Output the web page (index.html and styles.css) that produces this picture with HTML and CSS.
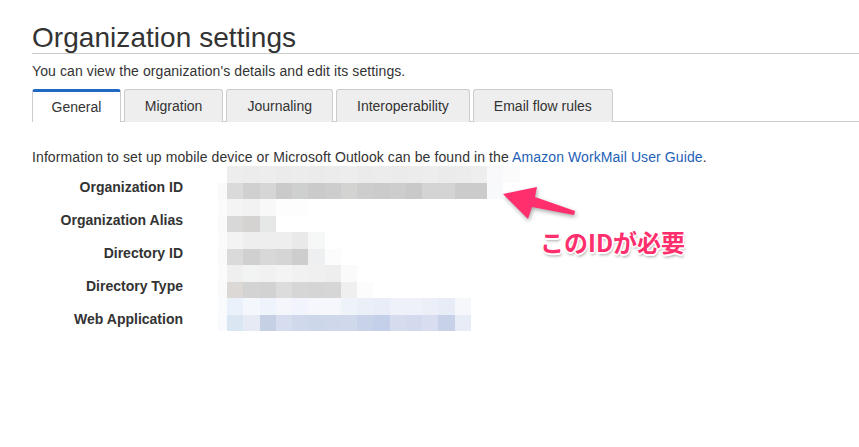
FILE: index.html
```html
<!DOCTYPE html>
<html lang="en">
<head>
<meta charset="utf-8">
<title>Organization settings</title>
<link rel="stylesheet" href="styles.css">
</head>
<body>
<main class="page">
  <h1 class="title">Organization settings</h1>
  <p class="subtitle">You can view the organization's details and edit its settings.</p>
  <nav class="tabs">
    <span class="tab active">General</span>
    <span class="tab">Migration</span>
    <span class="tab">Journaling</span>
    <span class="tab">Interoperability</span>
    <span class="tab">Email flow rules</span>
  </nav>
  <p class="info">Information to set up mobile device or Microsoft Outlook can be found in the <a class="link" href="#">Amazon WorkMail User Guide</a>.</p>
  <div class="fields">
    <div class="label">Organization ID</div><div class="mosaic" data-key="org"></div>
    <div class="label">Organization Alias</div><div class="mosaic" data-key="alias"></div>
    <div class="label">Directory ID</div><div class="mosaic" data-key="dir"></div>
    <div class="label">Directory Type</div><div class="mosaic" data-key="type"></div>
    <div class="label">Web Application</div><div class="mosaic" data-key="web"></div>
  </div>
  <svg class="arrow" width="90" height="45" viewBox="0 0 90 45" aria-hidden="true">
    <polygon points="3,10 37,3 35,13 75,27 74,31 32,23 28,35" fill="#ff2e6c"/>
  </svg>
  <div class="note">このIDが必要</div>
</main>
<script src="script.js"></script>
</body>
</html>
```
FILE: styles.css
```css
html, body {
  margin: 0;
  padding: 0;
  background: #ffffff;
}
body {
  font-family: "Liberation Sans", Arial, Helvetica, sans-serif;
  color: #333333;
  font-size: 14px;
  letter-spacing: 0.1px;
}
.page {
  position: relative;
  padding-left: 32px;
  height: 447px;
  box-sizing: border-box;
  overflow: hidden;
}
.title {
  margin: 23px 0 0 0;
  font-size: 28px;
  font-weight: normal;
  line-height: 30px;
  letter-spacing: 0.05px;
  color: #333333;
  border-bottom: 1px solid #cccccc;
}
.subtitle {
  margin: 8px 0 0 0;
  line-height: 18px;
  font-size: 14px;
  color: #333333;
}
.tabs {
  display: flex;
  gap: 3px;
  margin-top: 9px;
  border-bottom: 1px solid #cccccc;
  height: 32px;
}
.tab {
  box-sizing: border-box;
  height: 33px;
  padding: 0 20px 1px 20px;
  border: 1px solid #cccccc;
  border-bottom: none;
  border-radius: 3px 3px 0 0;
  background: #eeeeee;
  color: #333333;
  display: flex;
  align-items: center;
  justify-content: center;
  line-height: 18px;
  letter-spacing: 0;
}
.tab.active {
  background: #ffffff;
  border-top: 3px solid #1f68c4;
  padding: 0 18.5px 1px 18.5px;
}
.info {
  margin: 26px 0 0 0;
  line-height: 18px;
  color: #333333;
}
.link {
  color: #1f5fb8;
  text-decoration: none;
}
.fields {
  display: grid;
  grid-template-columns: 151px 1fr;
  column-gap: 35px;
  grid-auto-rows: 33px;
}
.label {
  text-align: right;
  font-weight: bold;
  line-height: 18px;
  padding-top: 12px;
  letter-spacing: 0;
  color: #333333;
}
.mosaic {
  display: flex;
  flex-direction: column;
}
.stripe {
  display: flex;
  height: 16.5px;
}
.cell {
  width: 16.25px;
  flex: none;
}
.cell.edge {
  width: 9px;
}
.arrow {
  position: absolute;
  left: 500px;
  top: 184px;
  overflow: visible;
  filter: drop-shadow(1px 2px 2px rgba(0, 0, 0, 0.35));
}
.note {
  position: absolute;
  left: 540px;
  top: 229px;
  font-family: "Noto Sans CJK JP", "Noto Sans", sans-serif;
  font-weight: bold;
  font-size: 24px;
  line-height: 26px;
  color: #ff2e6c;
  letter-spacing: 0;
  text-shadow:
    1.5px 0 0 #ffffff, -1.5px 0 0 #ffffff, 0 1.5px 0 #ffffff, 0 -1.5px 0 #ffffff,
    1px 1px 0 #ffffff, -1px -1px 0 #ffffff, 1px -1px 0 #ffffff, -1px 1px 0 #ffffff,
    1px 3px 3px rgba(0, 0, 0, 0.35);
}
```
FILE: script.js
```js
(function () {
  var W = "#ffffff";
  var data = {
    org: [
      ["#ffffff", "#ededed", "#ececec", "#ededed", "#ebebeb", "#ececec", "#ebebeb", "#ececec", "#ededed", "#ebebeb", "#ececec", "#ebebeb", "#ececec", "#ededed", "#ebebeb", "#ececec", "#eeeeee", "#f9f9fb", "#fbfbfc"],
      ["#fafafa", "#dadada", "#d0d0d0", "#d6d6d6", "#cacaca", "#cdd0cf", "#cacaca", "#cdcdcd", "#d3d3d1", "#cdcdcd", "#cbcbcb", "#cdcdcd", "#c9c9c9", "#d4d4d4", "#d4d4d4", "#cbcbcb", "#cbcbcb", "#f8f9fb"]
    ],
    alias: [
      ["#fbfbfb", "#f4f4f4", "#f2f2f2", "#f8f8f8", "#fdfdfd", "#fdfdfd"],
      ["#fafafa", "#d8d8d8", "#d4d3d2", "#e6e8e8"]
    ],
    dir: [
      ["#fbfbfb", "#f3f3f3", "#eeeeee", "#eeeeee", "#eeeeee", "#e9e9e9", "#f6f7f7"],
      ["#fafafa", "#dadada", "#d0d0d0", "#d8d8d8", "#d5d5d5", "#cdcdcd", "#eeeff0", "#fcfcfc"]
    ],
    type: [
      ["#fbfbfb", "#efefef", "#f2f3f3", "#f1f1f1", "#f4f4f4", "#f1f1f1", "#f0f0f0", "#eeeeee", "#fafafa"],
      ["#fafafa", "#dbd8d6", "#d3d3d3", "#d2d2d2", "#dcdcdc", "#d6d6d6", "#d5d5d5", "#d6d6d6", "#efefef", "#fcfcfc"]
    ],
    web: [
      ["#fafbfd", "#eaf1fa", "#f4f7fc", "#eff3fb", "#f4f6fc", "#f1f4fc", "#f5f7fd", "#f5f7fc", "#eef2f9", "#ebeff8", "#e9edf8", "#eef1f9", "#eef1f9", "#eceff8", "#e8ecf7", "#f6f7fb"],
      ["#f8fafd", "#dbe6f3", "#e6eaf4", "#c5d0e5", "#d5ddee", "#d0d9ec", "#cdd7ea", "#cfd8eb", "#d0d9ec", "#c8d3e9", "#c4d0e9", "#d5dcee", "#d3daed", "#d8def0", "#c7d2e8", "#e8ecf7"]
    ]
  };
  var blocks = document.querySelectorAll(".mosaic");
  blocks.forEach(function (block) {
    var rows = data[block.getAttribute("data-key")] || [];
    rows.forEach(function (colors) {
      var stripe = document.createElement("div");
      stripe.className = "stripe";
      colors.forEach(function (c, i) {
        var cell = document.createElement("span");
        cell.className = i === 0 ? "cell edge" : "cell";
        cell.style.background = c || W;
        stripe.appendChild(cell);
      });
      block.appendChild(stripe);
    });
  });
})();
```
